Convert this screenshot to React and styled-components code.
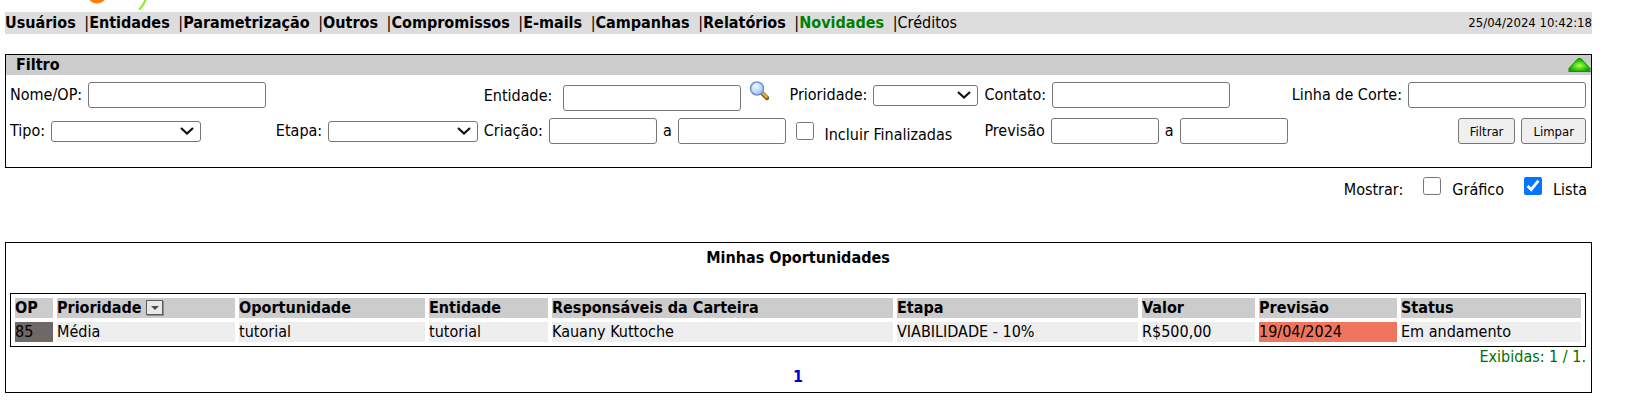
import React, { useState } from 'react'
import styled, { createGlobalStyle } from 'styled-components'

const menu = ['Usuários', 'Entidades', 'Parametrização', 'Outros', 'Compromissos', 'E-mails', 'Campanhas', 'Relatórios']

// column titles and their base widths
const columns = [
    { title: 'OP', width: 38 },
    { title: 'Prioridade', width: 178, sortable: true },
    { title: 'Oportunidade', width: 186 },
    { title: 'Entidade', width: 119 },
    { title: 'Responsáveis da Carteira', width: 341 },
    { title: 'Etapa', width: 241 },
    { title: 'Valor', width: 113 },
    { title: 'Previsão', width: 138 },
    { title: 'Status', width: 180 },
]

const rows = [
    ['85', 'Média', 'tutorial', 'tutorial', 'Kauany Kuttoche', 'VIABILIDADE - 10%', 'R$500,00', '19/04/2024', 'Em andamento'],
]

const cellColors = { 0: '#6d6966', 7: '#f0755f' }

const LogoTail = () => (
    <Logo width="60" height="12" viewBox="0 0 60 12" role="img" aria-label="logo">
        <ellipse cx="7" cy="-4" rx="9" ry="7.500" fill="#ff7f0e" />
        <path d="M24 0h1M32 0h1M38 0h1" stroke="#d5d5d5" />
        <path d="M56 -2Q53.500 6 49 9.500" stroke="#7cf01e" strokeWidth="2" fill="none" />
    </Logo>
)

const SearchIcon = () => (
    <svg width="20" height="20" viewBox="0 0 20 20" aria-hidden="true">
        <defs>
            <radialGradient id="glass" cx="0.4" cy="0.3" r="0.8">
                <stop offset="0" stopColor="#f4faff" />
                <stop offset="1" stopColor="#8fbcf5" />
            </radialGradient>
        </defs>
        <path d="M13 12L18 17" stroke="#7c5a24" strokeWidth="4.500" strokeLinecap="round" />
        <path d="M13 11.500L17.500 16" stroke="#e3a43c" strokeWidth="2.500" strokeLinecap="round" />
        <circle cx="8" cy="7.500" r="6.500" fill="url(#glass)" stroke="#6f93cc" strokeWidth="1.500" />
    </svg>
)

const CollapseIcon = () => (
    <svg width="23" height="14" viewBox="0 0 23 14" aria-hidden="true">
        <defs>
            <radialGradient id="leaf" cx="0.5" cy="0.55" r="0.5">
                <stop offset="0" stopColor="#b4ff50" />
                <stop offset="0.5" stopColor="#4fd81a" />
                <stop offset="1" stopColor="#12a005" />
            </radialGradient>
        </defs>
        <path d="M10 0.500H13L22.500 11V13.500H0.500V11Z" fill="url(#leaf)" />
        <path d="M10 0.500H13L22.500 11M10 0.500L0.500 11M0.500 13.500H22.500" stroke="#14930a" fill="none" />
    </svg>
)

const SortIcon = () => (
    <svg width="18" height="16" viewBox="0 0 18 16" aria-hidden="true">
        <path d="M1 15.500H17.500V1" stroke="#8c8c8c" fill="none" />
        <rect x="0.500" y="0.500" width="16" height="14" fill="#e8e8e8" stroke="#5c5c5c" />
        <path d="M5 6H13L9 10Z" fill="#4a4a4a" />
    </svg>
)

export default function App() {
    const [grafico, setGrafico] = useState(false)
    const [lista, setLista] = useState(true)

    return (
        <Page>
            <GlobalStyle />
            <LogoTail />
            <TopBar>
                <Menu>
                    {menu.map(item => (
                        <React.Fragment key={item}><MenuItem href="#">{item}</MenuItem> |</React.Fragment>
                    ))}
                    <MenuItem href="#" $color="#008000">Novidades</MenuItem> |
                    <MenuItem href="#" $weight="normal">Créditos</MenuItem>
                </Menu>
                <Clock>25/04/2024 10:42:18</Clock>
            </TopBar>

            <Panel as="form" onSubmit={e => e.preventDefault()}>
                <PanelHeader>
                    <PanelTitle>Filtro</PanelTitle>
                    <IconButton type="button" aria-label="Recolher filtro"><CollapseIcon /></IconButton>
                </PanelHeader>
                <Fields>
                    <WideCell>
                        <label htmlFor="nome">Nome/OP:</label>
                        <Input id="nome" />
                    </WideCell>
                    <SearchCell>
                        <label htmlFor="entidade">Entidade:</label>
                        <SearchInput id="entidade" />
                        <SearchButton type="button" aria-label="Buscar entidade"><SearchIcon /></SearchButton>
                    </SearchCell>
                    <Cell>
                        <label htmlFor="prioridade">Prioridade:</label>
                        <Select id="prioridade" $width={105} />
                    </Cell>
                    <SplitCell>
                        <Cell>
                            <label htmlFor="contato">Contato:</label>
                            <Input id="contato" />
                        </Cell>
                        <Cell>
                            <label htmlFor="corte">Linha de Corte:</label>
                            <Input id="corte" />
                        </Cell>
                    </SplitCell>

                    <Cell>
                        <label htmlFor="tipo">Tipo:</label>
                        <Select id="tipo" $width={150} />
                    </Cell>
                    <Cell>
                        <label htmlFor="etapa">Etapa:</label>
                        <Select id="etapa" $width={150} />
                    </Cell>
                    <Cell>
                        <label htmlFor="criacao">Criação:</label>
                        <Input id="criacao" $width={108} />
                        <label htmlFor="criacaoFim">a</label>
                        <Input id="criacaoFim" $width={108} />
                    </Cell>
                    <CheckCell>
                        <CheckLabel>
                            <Checkbox type="checkbox" />
                            Incluir Finalizadas
                        </CheckLabel>
                    </CheckCell>
                    <SplitCell>
                        <Cell>
                            <label htmlFor="previsao">Previsão</label>
                            <Input id="previsao" $width={108} />
                            <label htmlFor="previsaoFim">a</label>
                            <Input id="previsaoFim" $width={108} />
                        </Cell>
                        <Cell>
                            <Button type="submit">Filtrar</Button>
                            <Button type="reset">Limpar</Button>
                        </Cell>
                    </SplitCell>
                </Fields>
            </Panel>

            <ViewOptions>
                <span>Mostrar:</span>
                <CheckLabel>
                    <Checkbox type="checkbox" checked={grafico} onChange={() => setGrafico(!grafico)} />
                    Gráfico
                </CheckLabel>
                <CheckLabel>
                    <Checkbox type="checkbox" checked={lista} onChange={() => setLista(!lista)} />
                    Lista
                </CheckLabel>
            </ViewOptions>

            <ListPanel>
                <ListTitle>Minhas Oportunidades</ListTitle>
                <Table>
                    <colgroup>
                        {columns.map(col => <col key={col.title} width={col.width} />)}
                    </colgroup>
                    <thead>
                        <tr>
                            {columns.map(col => (
                                <HeadCell key={col.title}>
                                    <HeadContent>
                                        {col.title}
                                        {col.sortable && <IconButton type="button" aria-label="Ordenar"><SortIcon /></IconButton>}
                                    </HeadContent>
                                </HeadCell>
                            ))}
                        </tr>
                    </thead>
                    <tbody>
                        {rows.map(row => (
                            <tr key={row[0]}>
                                {row.map((value, i) => (
                                    <DataCell key={i} $color={cellColors[i]}>{value}</DataCell>
                                ))}
                            </tr>
                        ))}
                    </tbody>
                </Table>
                <Total>Exibidas: 1 / 1.</Total>
                <Pager><PageLink href="#">1</PageLink></Pager>
            </ListPanel>
        </Page>
    )
}

const GlobalStyle = createGlobalStyle`
    * {
        box-sizing: border-box;
    }
    body {
        margin: 0;
        color: #000;
        background: #fff;
        font: 16px/20px Tahoma, "DejaVu Sans Condensed", sans-serif;
    }
`
const Page = styled.div`
    padding: 0 34px 20px 5px;
`
const Logo = styled.svg`
    display: block;
    margin-left: 85px;
`
const TopBar = styled.nav`
    display: flex;
    height: 22px;
    align-items: center;
    justify-content: space-between;
    background: #ddd;
`
const Menu = styled.div`
    white-space: nowrap;
`
const MenuItem = styled.a`
    margin-right: 4px;
    color: ${props => props.$color || '#000'};
    font-weight: ${props => props.$weight || 'bold'};
    text-decoration: none;
`
const Clock = styled.span`
    font-size: 13px;
`
const Panel = styled.section`
    margin-top: 20px;
    border: 1px solid #000;
`
const PanelHeader = styled.div`
    display: flex;
    height: 20px;
    padding-left: 10px;
    align-items: center;
    justify-content: space-between;
    background: #ccc;
`
const PanelTitle = styled.h2`
    margin: 0;
    font-size: 16px;
    line-height: 20px;
`
const IconButton = styled.button`
    display: block;
    padding: 0;
    border: 0;
    background: none;
    svg {
        display: block;
    }
`
const Fields = styled.div`
    display: grid;
    grid-template-columns: 266fr 208fr 306fr 195fr 602fr;
    row-gap: 6px;
    padding: 6px 5px 22px 4px;
    align-items: start;
`
const Cell = styled.div`
    display: flex;
    min-height: 28px;
    gap: 6px;
    align-items: center;
    white-space: nowrap;
`
const WideCell = styled(Cell)`
    grid-column: span 2;
`
const SearchCell = styled(Cell)`
    min-height: 30px;
`
const CheckCell = styled(Cell)`
    padding: 4px 0 0 6px;
`
const SplitCell = styled.div`
    display: flex;
    justify-content: space-between;
`
const Input = styled.input`
    width: ${props => props.$width || 178}px;
    height: 26px;
    border: 1px solid #767676;
    border-radius: 3px;
`
const SearchInput = styled(Input)`
    align-self: flex-end;
    margin-left: 5px;
`
const SearchButton = styled(IconButton)`
    align-self: flex-start;
    margin-left: 2px;
`
const Select = styled.select`
    width: ${props => props.$width}px;
    height: 21px;
    padding: 0 24px 0 4px;
    appearance: none;
    border: 1px solid #767676;
    border-radius: 3px;
    background: #fff url("data:image/svg+xml,%3Csvg xmlns='http://www.w3.org/2000/svg' width='14' height='8'%3E%3Cpath d='M1 1L7 6.500L13 1' fill='none' stroke='%23111' stroke-width='2.200'/%3E%3C/svg%3E") no-repeat right 6px center;
`
const CheckLabel = styled.label`
    display: flex;
    gap: 11px;
    align-items: baseline;
`
const Checkbox = styled.input`
    width: 18px;
    height: 18px;
    margin: 0;
`
const Button = styled.button`
    height: 26px;
    padding: 0 11px;
    border: 1px solid #767676;
    border-radius: 3px;
    color: #000;
    background: #efefef;
    font: 13px Tahoma, "DejaVu Sans Condensed", sans-serif;
`
const ViewOptions = styled.div`
    display: flex;
    gap: 20px;
    padding: 9px 5px 0;
    justify-content: flex-end;
    align-items: baseline;
`
const ListPanel = styled.section`
    margin-top: 42px;
    padding: 5px 5px 5px 4px;
    border: 1px solid #000;
`
const ListTitle = styled.h2`
    margin: 0 0 25px;
    font-size: 16px;
    line-height: 20px;
    text-align: center;
`
const Table = styled.table`
    width: 100%;
    table-layout: fixed;
    border: 1px solid #000;
    border-spacing: 4px;
`
const HeadCell = styled.th`
    height: 20px;
    padding: 0;
    text-align: left;
    background: #ccc;
`
const HeadContent = styled.div`
    display: flex;
    gap: 4px;
    white-space: nowrap;
`
const DataCell = styled.td`
    height: 20px;
    padding: 0;
    background: ${props => props.$color || '#eee'};
`
const Total = styled.div`
    color: #007000;
    text-align: right;
`
const Pager = styled.div`
    text-align: center;
`
const PageLink = styled.a`
    color: #0000c8;
    font-weight: bold;
    text-decoration: none;
`
